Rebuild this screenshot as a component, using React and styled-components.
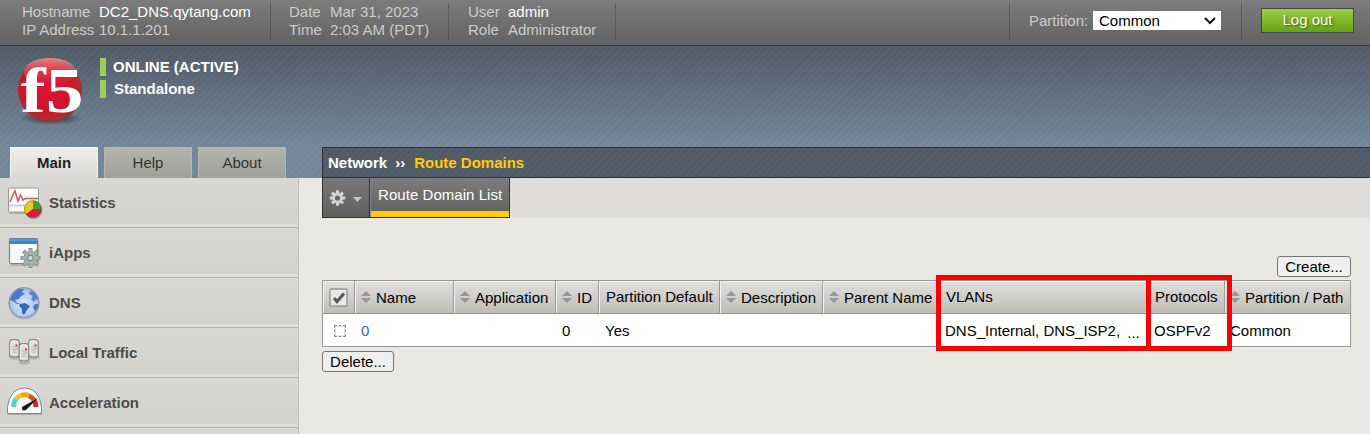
import React from "react";
import styled, { createGlobalStyle, css } from "styled-components";

const Global = createGlobalStyle`
  * { box-sizing: border-box; }
  html, body { margin: 0; padding: 0; }
  body {
    background: #e9e8e3;
    font-family: "Liberation Sans", Arial, sans-serif;
    font-size: 15px;
    line-height: 18px;
    color: #000;
    overflow: hidden;
  }
`;

const Page = styled.div`
  display: flex;
  flex-direction: column;
  width: 1370px;
  height: 434px;
  overflow: hidden;
`;

const TopBar = styled.header`
  display: flex;
  flex: none;
  height: 46px;
  padding-top: 3px;
  background: linear-gradient(#7c7c7c, #626262);
  border-bottom: 1px solid #363636;
  color: #ccc;
`;

const Facts = styled.dl`
  display: grid;
  grid-template-columns: ${(p) => p.$label}px auto;
  grid-auto-rows: 18px;
  align-content: start;
  width: ${(p) => p.$width}px;
  height: 37px;
  margin: 0;
  padding-left: ${(p) => p.$indent}px;
  border-right: 1px dotted #414141;
  white-space: nowrap;
`;

const Term = styled.dt``;

const Value = styled.dd`
  margin: 0;
  color: ${(p) => (p.$strong ? "#fff" : "#ccc")};
`;

const PartitionBox = styled.div`
  display: flex;
  width: 233px;
  height: 37px;
  margin-left: auto;
  padding: 8px 0 0 19px;
  border-left: 1px dotted #414141;
  border-right: 1px dotted #414141;
  white-space: nowrap;
`;

const PartitionLabel = styled.span`
  width: 64px;
  padding-top: 1px;
`;

const Select = styled.div`
  display: flex;
  justify-content: space-between;
  align-items: center;
  width: 128px;
  height: 19px;
  padding: 0 4px 0 6px;
  background: #fff;
  color: #000;
`;

const LogoutButton = styled.button`
  width: 93px;
  height: 25px;
  margin: 5px 16px 0 19px;
  padding: 0 0 2px;
  border: 1px solid #454b40;
  background: linear-gradient(#9cce4c, #65a30c);
  color: #fff;
  font: inherit;
  text-shadow: 1px 1px 2px #375c05;
`;

const stripes = css`
  repeating-linear-gradient(135deg, rgba(255, 255, 255, 0.022) 0 2px, rgba(0, 0, 0, 0.014) 2px 5px)
`;

const Banner = styled.section`
  display: grid;
  grid-template-columns: 322px 1fr;
  grid-template-rows: 101px 31px;
  flex: none;
  background: ${stripes}, linear-gradient(#4f5b68, #75879a 75%, #75879a);
`;

const Device = styled.div`
  display: flex;
  grid-column: 1 / -1;
  padding: 8px 0 0 14px;
`;

const StatusList = styled.div`
  display: flex;
  flex-direction: column;
  gap: 4px;
  padding: 4px 0 0 10px;
`;

const Status = styled.div`
  height: 18px;
  border-left: 6px solid #9fce57;
  padding-left: ${(p) => p.$pad}px;
  color: #fff;
  font-weight: bold;
`;

const Tabs = styled.nav`
  display: flex;
  gap: 6px;
  padding-left: 10px;
`;

const Tab = styled.div`
  width: 88px;
  padding-top: 6px;
  border: 1px solid ${(p) => (p.$active ? "#f4f3f1" : "#b5b6b0")};
  border-bottom: 0;
  background: ${(p) => (p.$active ? "linear-gradient(#efeeeb, #d9d8d4)" : "linear-gradient(#b4b5af, #9fa09a)")};
  color: ${(p) => (p.$active ? "#222" : "#333")};
  font-weight: ${(p) => (p.$active ? "bold" : "normal")};
  text-align: center;
`;

const Breadcrumb = styled.div`
  display: flex;
  padding: 6px 0 0 5px;
  border: 1px solid #2f3338;
  border-right: 0;
  background: ${stripes}, #505b69;
  color: #fff;
  font-weight: bold;
`;

const Chevrons = styled.span`
  width: 27px;
  padding-left: 8px;
`;

const Current = styled.span`
  color: #fc0;
`;

const Body = styled.div`
  display: flex;
  flex: 1;
  min-height: 0;
`;

const Sidebar = styled.aside`
  flex: none;
  width: 299px;
  border-right: 1px solid #bdbcb8;
  background: #d8d7d3;
  overflow: hidden;
`;

const MenuItem = styled.div`
  display: flex;
  align-items: center;
  height: 50px;
  padding-left: 5px;
  border-bottom: 1px solid #b5b4b0;
  background: linear-gradient(#d9d8d4, #d2d1cc 46px, #deddd9 46px);
  color: #4c4c4c;
  font-weight: bold;
`;

const MenuIcon = styled.svg`
  flex: none;
  width: 38px;
  height: 42px;
  margin-right: 6px;
`;

const Main = styled.main`
  flex: 1;
  padding: 0 0 0 23px;
`;

const Toolbar = styled.div`
  display: flex;
  height: 40px;
  background: #dedcd8;
  border-bottom: 1px solid #e4e2de;
`;

const GearButton = styled.div`
  display: flex;
  align-items: center;
  width: 47px;
  height: 40px;
  border: 1px solid #333;
  border-width: 0 0 1px 1px;
  padding-left: 6px;
  background: linear-gradient(#787878, #606060);
`;

const ListTab = styled.div`
  width: 141px;
  height: 40px;
  padding: 8px 0 0 8px;
  border: 1px solid #333;
  border-top: 0;
  background: linear-gradient(#fc0, #fc0) bottom / 100% 6px no-repeat, linear-gradient(#7c7c7c, #606060);
  box-shadow: inset 1px 0 0 #8a8a8a;
  color: #fff;
  letter-spacing: 0.05px;
  white-space: nowrap;
`;

const Content = styled.div`
  padding: 38px 19px 0 0;
`;

const Actions = styled.div`
  display: flex;
  justify-content: ${(p) => (p.$end ? "flex-end" : "flex-start")};
  margin-bottom: ${(p) => (p.$end ? 3 : 0)}px;
  margin-top: ${(p) => (p.$end ? 0 : 4)}px;
`;

const PlainButton = styled.button`
  width: ${(p) => p.$width}px;
  height: 21px;
  padding: 0;
  border: 1px solid #757575;
  border-radius: 3px;
  background: #efefef;
  color: #000;
  font: inherit;
`;

const Table = styled.div`
  position: relative;
  border: 1px solid #979797;
  background: #fff;
`;

const Row = styled.div`
  display: grid;
  grid-template-columns: 32px 99px 102px 43px 121px 103px 115px 209px 78px 1fr;
`;

const HeadCell = styled.div`
  display: flex;
  height: 33px;
  padding: ${(p) => (p.$plain ? 7 : 8)}px 0 0 ${(p) => p.$pad ?? 5}px;
  border-right: 1px solid #979797;
  border-bottom: 1px solid #979797;
  box-shadow: inset 1px 1px 0 #f5f4f2;
  background: linear-gradient(#e1e0dd, #bfbdb8);
  white-space: nowrap;
  &:last-child { border-right: 0; }
`;

const Cell = styled.div`
  height: 32px;
  padding: 8px 0 0 ${(p) => p.$pad ?? 6}px;
  color: ${(p) => (p.$link ? "#3c5fd0" : "#000")};
  white-space: nowrap;
`;

const Overflow = styled.span`
  position: relative;
  top: 2px;
  margin-left: 3px;
`;

const SortGlyph = styled.svg`
  flex: none;
  width: 10px;
  height: 12px;
  margin: 2px 5px 0 1px;
`;

const HeadCheck = styled.svg`
  width: 20px;
  height: 20px;
  margin-top: -1px;
`;

const RowCheck = styled.span`
  display: block;
  width: 12px;
  height: 12px;
  margin: 3px 0 0 5px;
  border: 1px dashed #8e8e8e;
  box-shadow: inset 0 0 0 1px #e4e4e4;
`;

const Highlight = styled.div`
  position: absolute;
  top: -6px;
  left: ${(p) => p.$left}px;
  width: ${(p) => p.$width}px;
  height: 76px;
  border: 5px solid #f00;
`;

const Sort = () => (
  <SortGlyph viewBox="0 0 10 12">
    <path d="M5 0L10 5H0zM0 7H10L5 12z" fill="#979797" />
  </SortGlyph>
);

const LogoArt = styled.svg`
  flex: none;
  width: 76px;
  height: 92px;
  overflow: visible;
`;

const Logo = () => (
  <LogoArt viewBox="0 0 76 92">
    <defs>
      <radialGradient id="ball" cx=".46" cy=".45" r=".62">
        <stop offset="0" stopColor="#dd1432" />
        <stop offset=".6" stopColor="#cf142b" />
        <stop offset=".85" stopColor="#a82f36" />
        <stop offset="1" stopColor="#6b2024" />
      </radialGradient>
      <linearGradient id="gloss" x1="0" y1="0" x2="0" y2="1">
        <stop offset="0" stopColor="#f0a9a6" stopOpacity=".75" />
        <stop offset="1" stopColor="#e0454c" stopOpacity="0" />
      </linearGradient>
      <radialGradient id="ballShade">
        <stop offset="0" stopColor="#20262e" stopOpacity=".9" />
        <stop offset="1" stopColor="#20262e" stopOpacity="0" />
      </radialGradient>
    </defs>
    <ellipse cx="37" cy="64" rx="32" ry="7" fill="url(#ballShade)" />
    <circle cx="36" cy="36" r="32" fill="url(#ball)" />
    <ellipse cx="36" cy="18" rx="26" ry="14" fill="url(#gloss)" />
    <text
      transform="translate(6.500 58) scale(1.18 1)"
      fill="#fff"
      fontFamily="Liberation Serif, serif"
      fontWeight="bold"
      fontSize="64"
    >
      f5
    </text>
  </LogoArt>
);

const Gear = ({ cx, cy, r, fill, hole }) => (
  <g transform={`translate(${cx} ${cy})`}>
    {[0, 45, 90, 135].map((a) => (
      <rect key={a} x={-r * 0.2} y={-r} width={r * 0.4} height={r * 2} fill={fill} transform={`rotate(${a})`} />
    ))}
    <circle r={r * 0.7} fill={fill} />
    <circle r={r * 0.34} fill={hole} />
  </g>
);

const Server = ({ x, y }) => (
  <g transform={`translate(${x} ${y})`}>
    <path d="M.7 17V4Q.7.7 4 .7H7Q10.300.7 10.300 4V17Q5.500 19 .7 17z" fill="#dededc" stroke="#858585" strokeWidth="1.200" />
    <path d="M2 16V4Q2 2 4 2H7Q9 2 9 4" fill="none" stroke="#f7f7f7" />
    <path d="M3 8H6M3 10.500H8M3 13H8" stroke="#b8b8b6" />
    <rect x="6.500" y="5.500" width="2" height="2" fill="#e3263c" />
    <rect x="6.500" y="8.500" width="2" height="1.500" fill="#8cdc72" />
  </g>
);

const icons = {
  Statistics: (
    <>
      <rect x="4" y="7" width="30" height="25" rx="1" fill="#777" opacity=".35" />
      <rect x="3.500" y="6" width="30" height="24" rx="1" fill="#fbfbfb" stroke="#96999b" />
      <path d="M4 23.500H33" stroke="#bed2e8" strokeWidth="2" />
      <path d="M5 20L8 12.500L10 9L13 19L15.500 13L18 18L20 16.500H33" fill="none" stroke="#d3555d" strokeWidth="1.500" />
      <circle cx="28.500" cy="28.500" r="9" fill="#555" opacity=".35" />
      <path d="M28 27V18.500A8.500 8.500 0 0 0 21 32z" fill="#f0c91c" />
      <path d="M28 27V18.500A8.500 8.500 0 0 1 36.500 27z" fill="#3aa52b" />
      <path d="M28 27H36.500A8.500 8.500 0 0 1 21 32z" fill="#d91f3c" />
      <circle cx="28" cy="27" r="8.500" fill="none" stroke="#71531d" strokeOpacity=".5" />
    </>
  ),
  iApps: (
    <>
      <rect x="5" y="8" width="29" height="26" rx="2" fill="#777" opacity=".35" />
      <rect x="4.500" y="6.500" width="28" height="25" rx="1.500" fill="#f7f8fa" stroke="#75838f" strokeWidth="1.200" />
      <rect x="5" y="7" width="27" height="5" fill="#3f83cd" />
      <path d="M5 8H32" stroke="#6fa5e0" />
      <Gear cx={25.5} cy={26} r={9.9} fill="#7b8887" hole="#7b8887" />
      <Gear cx={25.5} cy={26} r={9} fill="#a5afae" hole="#6f7b7b" />
      <circle cx="25.500" cy="26" r="2.200" fill="#d4d8d7" />
    </>
  ),
  DNS: (
    <>
      <defs>
        <radialGradient id="sea" cx=".5" cy=".55" r=".6">
          <stop offset="0" stopColor="#d9e6fb" />
          <stop offset=".65" stopColor="#b4cbf3" />
          <stop offset="1" stopColor="#88a6de" />
        </radialGradient>
      </defs>
      <circle cx="19" cy="22" r="15.500" fill="#777" opacity=".35" />
      <circle cx="19" cy="20.500" r="15" fill="url(#sea)" stroke="#8191ad" />
      <path d="M5 18Q7 10 14 7L19 7L17 10L20 12L16 14L14 17L10 18L12 21L16 22L12 22L8 19z" fill="#4f77cb" />
      <path d="M15 22L20 21L25 24L22 28L19 33L17 31L17 27L14 24z" fill="#3d66bd" />
      <path d="M25 9L29 10Q33 14 33.500 18L31 17L29 20L26 17L28 14L24 12z" fill="#567fcf" />
      <path d="M30 22L33.500 22Q33 27 30 29L28 25z" fill="#4c74c8" />
    </>
  ),
  "Local Traffic": (
    <>
      <g fill="#777" opacity=".35">
        <ellipse cx="10" cy="25.500" rx="6" ry="2" />
        <ellipse cx="29" cy="25.500" rx="6" ry="2" />
        <ellipse cx="19.500" cy="30.500" rx="6" ry="2" />
      </g>
      <Server x={4} y={7} />
      <Server x={23} y={7} />
      <Server x={13.5} y={11} />
    </>
  ),
  Acceleration: (
    <>
      <path d="M2 33V26Q4 8 20 8Q36 9 37 26V33z" fill="#777" opacity=".4" />
      <path d="M2.500 30V25Q5 6 19.500 6Q34 6 36.500 25V30Q36.500 31.500 35 31.500H4Q2.500 31.500 2.500 30z" fill="#fafaf8" stroke="#858585" />
      <g fill="none" strokeWidth="5">
        <path d="M8.500 25Q8.500 20 11 17" stroke="#55d5c6" />
        <path d="M11 17Q13 14.500 16 13.500" stroke="#e6c51f" />
        <path d="M16 13.500Q20 12 24 14" stroke="#f3a017" />
        <path d="M24 14Q27 15 29 18" stroke="#e54a1b" />
        <path d="M29 18Q31 21 31 25" stroke="#d92034" />
      </g>
      <path d="M17 25L33 16L22 27Q18 30 17 27z" fill="#151515" />
    </>
  ),
};

const columns = [
  { name: "Name", sort: true, pad: 5 },
  { name: "Application", sort: true },
  { name: "ID", sort: true },
  { name: "Partition Default", pad: 7 },
  { name: "Description", sort: true },
  { name: "Parent Name", sort: true },
  { name: "VLANs", pad: 8 },
  { name: "Protocols", pad: 8 },
  { name: "Partition / Path", sort: true, pad: 4 },
];

export default function App() {
  return (
    <Page>
      <Global />
      <TopBar>
        <Facts $label={77} $width={271} $indent={22}>
          <Term>Hostname</Term><Value $strong>DC2_DNS.qytang.com</Value>
          <Term>IP Address</Term><Value>10.1.1.201</Value>
        </Facts>
        <Facts $label={41} $width={178} $indent={18}>
          <Term>Date</Term><Value>Mar 31, 2023</Value>
          <Term>Time</Term><Value>2:03 AM (PDT)</Value>
        </Facts>
        <Facts $label={40} $width={167} $indent={19}>
          <Term>User</Term><Value $strong>admin</Value>
          <Term>Role</Term><Value>Administrator</Value>
        </Facts>
        <PartitionBox>
          <PartitionLabel>Partition:</PartitionLabel>
          <Select>
            Common
            <svg width="14" height="10" viewBox="0 0 14 10">
              <path d="M2 2L7 7L12 2" fill="none" stroke="#111" strokeWidth="2" />
            </svg>
          </Select>
        </PartitionBox>
        <LogoutButton>Log out</LogoutButton>
      </TopBar>
      <Banner>
        <Device>
          <Logo />
          <StatusList>
            <Status $pad={7}>ONLINE (ACTIVE)</Status>
            <Status $pad={8}>Standalone</Status>
          </StatusList>
        </Device>
        <Tabs>
          <Tab $active>Main</Tab>
          <Tab>Help</Tab>
          <Tab>About</Tab>
        </Tabs>
        <Breadcrumb>
          Network<Chevrons>››</Chevrons><Current>Route Domains</Current>
        </Breadcrumb>
      </Banner>
      <Body>
        <Sidebar>
          {Object.entries(icons).map(([name, art]) => (
            <MenuItem key={name}>
              <MenuIcon viewBox="0 0 38 42">{art}</MenuIcon>
              {name}
            </MenuItem>
          ))}
        </Sidebar>
        <Main>
          <Toolbar>
            <GearButton>
              <svg width="34" height="18" viewBox="0 0 34 18">
                <Gear cx={8.5} cy={9} r={7.7} fill="#d2d2d2" hole="#696969" />
                <path d="M24 8H33L28.500 13z" fill="#c4c4c4" />
              </svg>
            </GearButton>
            <ListTab>Route Domain List</ListTab>
          </Toolbar>
          <Content>
            <Actions $end><PlainButton $width={74}>Create...</PlainButton></Actions>
            <Table>
              <Row>
                <HeadCell $pad={6}>
                  <HeadCheck viewBox="0 0 20 20">
                    <rect x="1" y="1" width="17" height="17" rx="1" fill="#e9e8e6" stroke="#999" strokeWidth="1.500" />
                    <path d="M5 10L8 13.500L15 5.500" fill="none" stroke="#5c5c5c" strokeWidth="3.200" />
                  </HeadCheck>
                </HeadCell>
                {columns.map((c) => (
                  <HeadCell key={c.name} $pad={c.pad} $plain={!c.sort}>
                    {c.sort && <Sort />}
                    {c.name}
                  </HeadCell>
                ))}
              </Row>
              <Row>
                <Cell><RowCheck /></Cell>
                <Cell $link>0</Cell>
                <Cell />
                <Cell>0</Cell>
                <Cell>Yes</Cell>
                <Cell />
                <Cell />
                <Cell $pad={7}>DNS_Internal, DNS_ISP2, <Overflow>...</Overflow></Cell>
                <Cell $pad={7}>OSPFv2</Cell>
                <Cell $pad={5}>Common</Cell>
              </Row>
              <Highlight $left={613} $width={215} />
              <Highlight $left={823} $width={86} />
            </Table>
            <Actions><PlainButton $width={72}>Delete...</PlainButton></Actions>
          </Content>
        </Main>
      </Body>
    </Page>
  );
}
